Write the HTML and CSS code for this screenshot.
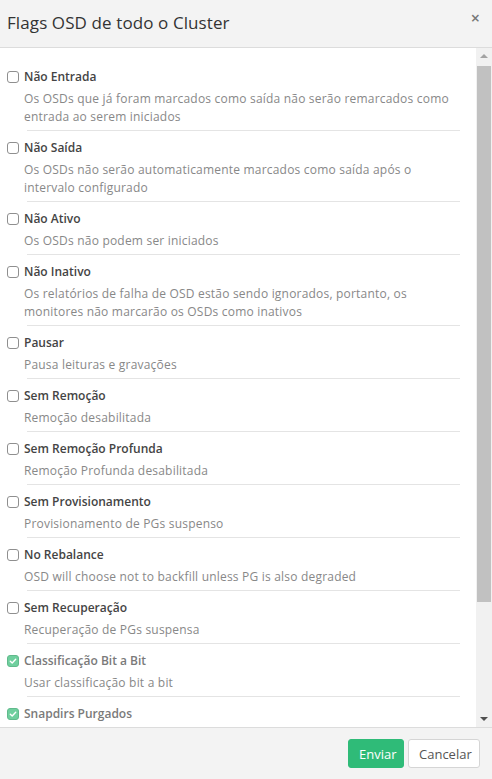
FILE: index.html
```html
<!DOCTYPE html>
<html lang="pt">
<head>
<meta charset="utf-8">
<link rel="stylesheet" href="styles.css">
</head>
<body>
<div class="modal">
  <div class="header">
    <h1 class="title">Flags OSD de todo o Cluster</h1>
    <span class="close">×</span>
  </div>
  <div class="body">
    <div class="list">
      <div class="item">
        <div class="label"><span class="box"></span>Não Entrada</div>
        <div class="desc">Os OSDs que já foram marcados como saída não serão remarcados como entrada ao serem iniciados</div>
      </div>
      <div class="item">
        <div class="label"><span class="box"></span>Não Saída</div>
        <div class="desc">Os OSDs não serão automaticamente marcados como saída após o intervalo configurado</div>
      </div>
      <div class="item">
        <div class="label"><span class="box"></span>Não Ativo</div>
        <div class="desc">Os OSDs não podem ser iniciados</div>
      </div>
      <div class="item">
        <div class="label"><span class="box"></span>Não Inativo</div>
        <div class="desc">Os relatórios de falha de OSD estão sendo ignorados, portanto, os monitores não marcarão os OSDs como inativos</div>
      </div>
      <div class="item">
        <div class="label"><span class="box"></span>Pausar</div>
        <div class="desc">Pausa leituras e gravações</div>
      </div>
      <div class="item">
        <div class="label"><span class="box"></span>Sem Remoção</div>
        <div class="desc">Remoção desabilitada</div>
      </div>
      <div class="item">
        <div class="label"><span class="box"></span>Sem Remoção Profunda</div>
        <div class="desc">Remoção Profunda desabilitada</div>
      </div>
      <div class="item">
        <div class="label"><span class="box"></span>Sem Provisionamento</div>
        <div class="desc">Provisionamento de PGs suspenso</div>
      </div>
      <div class="item">
        <div class="label"><span class="box"></span>No Rebalance</div>
        <div class="desc">OSD will choose not to backfill unless PG is also degraded</div>
      </div>
      <div class="item">
        <div class="label"><span class="box"></span>Sem Recuperação</div>
        <div class="desc">Recuperação de PGs suspensa</div>
      </div>
      <div class="item disabled">
        <div class="label"><span class="box checked"><svg viewBox="0 0 12 12" width="12" height="12"><path d="M3.3 6.2 L5.2 8 L8.7 4.3" fill="none" stroke="#fff" stroke-width="1.4" stroke-linecap="round" stroke-linejoin="round"/></svg></span>Classificação Bit a Bit</div>
        <div class="desc">Usar classificação bit a bit</div>
      </div>
      <div class="item disabled">
        <div class="label"><span class="box checked"><svg viewBox="0 0 12 12" width="12" height="12"><path d="M3.3 6.2 L5.2 8 L8.7 4.3" fill="none" stroke="#fff" stroke-width="1.4" stroke-linecap="round" stroke-linejoin="round"/></svg></span>Snapdirs Purgados</div>
      </div>
    </div>
    <div class="scrollbar">
      <div class="arrow up"></div>
      <div class="track"><div class="thumb"></div></div>
      <div class="arrow down"></div>
    </div>
  </div>
  <div class="footer">
    <button class="btn primary">Enviar</button>
    <button class="btn default">Cancelar</button>
  </div>
</div>
</body>
</html>
```
FILE: styles.css
```css
html, body {
  margin: 0;
  padding: 0;
  background: #fff;
}
body {
  font-family: "Open Sans", "Noto Sans", sans-serif;
  color: #333;
}
.modal {
  width: 492px;
  height: 779px;
  display: flex;
  flex-direction: column;
  overflow: hidden;
}
.header {
  height: 48px;
  box-sizing: border-box;
  background: #f3f3f3;
  border-bottom: 1px solid #dcdcdc;
  display: flex;
  justify-content: space-between;
  align-items: flex-start;
  padding: 0 12px 0 7px;
  flex: none;
}
.title {
  margin: 0;
  font-size: 17px;
  font-weight: 400;
  line-height: 22px;
  padding-top: 12px;
  color: #333;
  letter-spacing: 0.1px;
}
.close {
  font-size: 16px;
  line-height: 16px;
  padding-top: 10px;
  color: #777;
  font-weight: 600;
}
.body {
  flex: 1;
  display: flex;
  min-height: 0;
  background: #fff;
  border-bottom: 1px solid #dcdcdc;
}
.list {
  flex: 1;
  padding: 20px 16px 0 7px;
  overflow: hidden;
}
.item {
  border-bottom: 1px solid #e4e4e4;
  margin-left: 20px;
  padding-bottom: 4px;
  margin-bottom: 8px;
}
.item:last-child { border-bottom: 0; }
.label {
  margin-left: -20px;
  display: flex;
  align-items: center;
  font-size: 12px;
  font-weight: 600;
  line-height: 18px;
  color: #444;
}
.box {
  width: 12px;
  height: 12px;
  box-sizing: border-box;
  border: 1px solid #8f8f8f;
  border-radius: 3px;
  margin-right: 5px;
  flex: none;
  display: flex;
}
.box.checked {
  background: #4cc487;
  border-color: #3aaa70;
  opacity: 0.8;
}
.box svg { display: block; margin: -1px; }
.disabled .label { color: #7a7a7a; }
.desc {
  margin-top: 4px;
  margin-left: -3px;
  font-size: 12px;
  line-height: 18px;
  color: #888;
  letter-spacing: 0.2px;
}
.scrollbar {
  width: 16px;
  flex: none;
  background: #f1f1f1;
  display: flex;
  flex-direction: column;
  align-items: center;
}
.arrow {
  height: 16px;
  width: 100%;
  display: flex;
  align-items: center;
  justify-content: center;
  flex: none;
}
.arrow.up::before {
  content: "";
  border-left: 4px solid transparent;
  border-right: 4px solid transparent;
  border-bottom: 4px solid #a3a3a3;
}
.arrow.down::before {
  content: "";
  border-left: 4px solid transparent;
  border-right: 4px solid transparent;
  border-top: 4px solid #505050;
}
.track {
  flex: 1;
  width: 100%;
  padding: 2px 1px 0;
  box-sizing: border-box;
}
.thumb {
  height: 536px;
  background: #c1c1c1;
}
.footer {
  height: 51px;
  flex: none;
  background: #f3f3f3;
  display: flex;
  justify-content: flex-end;
  align-items: center;
  gap: 4px;
  padding: 0 12px 0 0;
}
.btn {
  font-family: "Open Sans", "Noto Sans", sans-serif;
  font-size: 13px;
  height: 29px;
  padding: 0 10px;
  border-radius: 3px;
  cursor: pointer;
}
.btn.primary {
  background: #2fbb78;
  border: 1px solid #2fbb78;
  color: #fff;
  width: 56px;
}
.btn.default {
  background: #fff;
  border: 1px solid #d5d5d5;
  color: #555;
  width: 72px;
}
```
